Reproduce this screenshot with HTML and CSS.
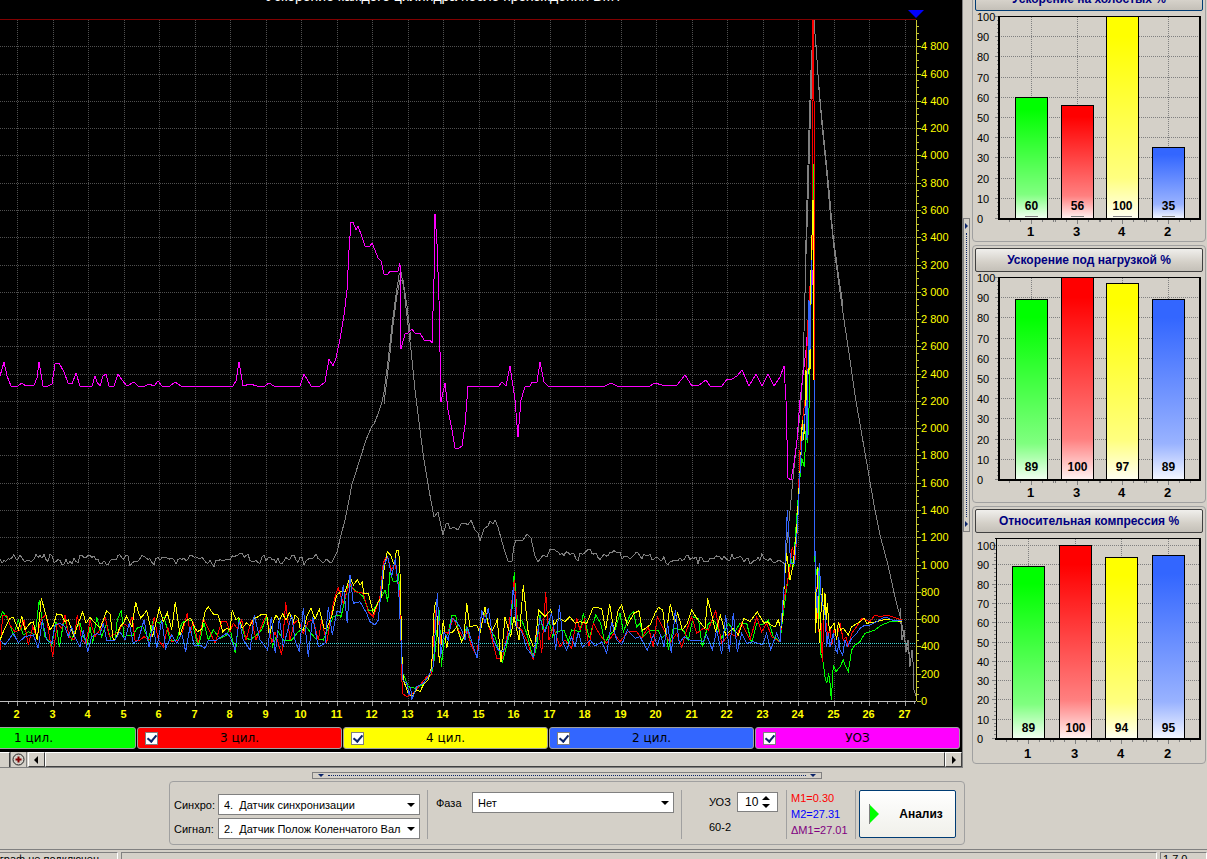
FILE: index.html
```html
<!DOCTYPE html>
<html lang="ru">
<head>
<meta charset="utf-8">
<title>Ускорение каждого цилиндра</title>
<link rel="stylesheet" href="styles.css">
</head>
<body>
<main class="workspace">
  <section class="scope">
    <svg class="scope-plot" id="scope" viewBox="0 0 962 726" role="img" aria-label="График ускорения"></svg>
    <div class="channels">
      <label class="channel green"><input type="checkbox" checked><span>1 цил.</span></label>
      <label class="channel red"><input type="checkbox" checked><span>3 цил.</span></label>
      <label class="channel yellow"><input type="checkbox" checked><span>4 цил.</span></label>
      <label class="channel blue"><input type="checkbox" checked><span>2 цил.</span></label>
      <label class="channel magenta"><input type="checkbox" checked><span>УОЗ</span></label>
    </div>
    <div class="scrollbar">
      <span class="stub"></span>
      <button class="zoom" aria-label="Увеличить"><svg width="13" height="13" viewBox="0 0 13 13"><circle cx="6.5" cy="6.5" r="5.5" fill="none" stroke="#222"/><path d="M6.5 3.5v6M3.5 6.5h6" stroke="#800000" stroke-width="2"/></svg></button>
      <button class="raised" aria-label="Влево"><svg width="5" height="8" viewBox="0 0 5 8"><path d="M4 0v8L0 4z"/></svg></button>
      <span class="thumb raised"></span>
      <button class="raised" aria-label="Вправо"><svg width="5" height="8" viewBox="0 0 5 8"><path d="M1 0v8L5 4z"/></svg></button>
    </div>
  </section>
  <div class="vsplit"><div class="vhandle"><i></i><b></b><i></i></div></div>
  <aside class="side">
    <section class="panel"><button class="caption active">Ускорение на холостых %</button><svg class="bars" viewBox="-1 0 232 230" data-values="60,56,100,35" data-left="25" data-top="6" data-bottom="208" data-centers="57,103,148,194" data-underline="1"></svg></section>
    <section class="panel"><button class="caption">Ускорение под нагрузкой %</button><svg class="bars" viewBox="-1 0 232 230" data-values="89,100,97,89" data-left="25" data-top="6" data-bottom="208" data-centers="57,103,148,194"></svg></section>
    <section class="panel"><button class="caption">Относительная компрессия %</button><svg class="bars" viewBox="-1 0 232 230" data-values="89,100,94,95" data-left="22" data-top="13" data-bottom="206" data-centers="54,101,147,194"></svg></section>
  </aside>
</main>
<footer class="dock">
  <div class="hhandle"><i></i><b></b><i></i></div>
  <form class="controls">
    <div class="sources">
      <label for="sync">Синхро:</label>
      <span class="combo"><select id="sync"><option>4.&nbsp; Датчик синхронизации</option></select></span>
      <label for="signal">Сигнал:</label>
      <span class="combo"><select id="signal"><option>2.&nbsp; Датчик Полож Коленчатого Вала</option></select></span>
    </div>
    <div class="phase">
      <label for="phase">Фаза</label>
      <span class="combo"><select id="phase"><option>Нет</option></select></span>
    </div>
    <div class="timing">
      <label for="uoz">УОЗ</label>
      <span class="spin"><input id="uoz" type="text" inputmode="numeric" value="10"><span class="spin-buttons"><button type="button" class="up" aria-label="Больше"></button><button type="button" class="down" aria-label="Меньше"></button></span></span>
      <span>60-2</span>
    </div>
    <div class="markers"><span class="m1">M1=0.30</span><span class="m2">M2=27.31</span><span class="dm">ΔM1=27.01</span></div>
    <div class="run"><button type="button" class="analyse"><svg width="10" height="20" viewBox="0 0 10 20"><path d="M0 0v20L10 10z" fill="#0f0"/><path d="M.5 0v20" stroke="#808080"/></svg><span>Анализ</span></button></div>
  </form>
</footer>
<div class="status"><span class="cell device">Осциллограф не подключен</span><span class="cell middle"></span><span class="cell version">1.7.0</span></div>
<script src="charts.js"></script>
</body>
</html>
```
FILE: styles.css
```css
* { box-sizing: border-box; }
body {
  margin: 0;
  height: 100vh;
  display: flex;
  flex-direction: column;
  overflow: hidden;
  background: #d4d0c8;
  color: #000;
  font: 11px/14px "Liberation Sans", Arial, sans-serif;
}
button, input, select { font: inherit; color: inherit; margin: 0; padding: 0; }

.workspace { display: flex; flex: none; align-items: flex-start; }
.scope { flex: 1; min-width: 0; background: #000; border-right: 1px solid #808080; overflow: hidden; }
.scope-plot { display: block; width: 100%; }
.title { font-size: 14px; fill: #fff; }
.axis-y { font-size: 11px; fill: #ff0; }
.axis-x { font-size: 11px; font-weight: bold; fill: #ff0; text-anchor: middle; }

.channels {
  display: grid;
  grid-template-columns: repeat(5, 1fr);
  column-gap: 1px;
  margin-left: -69px;
  padding: 1px 2px 3px 0;
}
.channel {
  display: flex;
  align-items: center;
  height: 22px;
  padding: 0 7px;
  border: 1px solid #a0a0a0;
  border-radius: 3px;
  font: 12px/18px "DejaVu Sans", Verdana, sans-serif;
}
.channel span { flex: 1; text-align: center; margin-right: 13px; }
.channel input {
  appearance: none;
  flex: none;
  width: 13px;
  height: 13px;
  border: 1px solid #808080;
  background: #fff;
  display: grid;
  place-items: center;
}
.channel input:checked::before {
  content: "";
  width: 4px;
  height: 7px;
  margin-bottom: 2px;
  border: solid #0a246a;
  border-width: 0 2px 2px 0;
  transform: rotate(40deg);
}
.green { background: #0f0; }
.red { background: #f00; }
.yellow { background: #ff0; }
.blue { background: #36f; }
.magenta { background: #f0f; }

.scrollbar { display: flex; height: 16px; background: #d4d0c8; border-bottom: 1px solid #808080; }
.scrollbar button, .thumb { display: grid; place-items: center; background: #d4d0c8; }
.scrollbar button { flex: none; width: 17px; }
.stub { width: 10px; border-right: 1px solid #404040; border-top: 1px solid #fff; }
.zoom { border: solid #808080; border-width: 0 1px; margin-right: 1px; }
.raised { border: 1px solid; border-color: #fff #404040 #404040 #fff; }
.thumb { flex: 1; }

.vsplit { flex: none; width: 9px; align-self: center; }
.vhandle {
  display: flex; flex-direction: column; align-items: center; justify-content: space-between;
  width: 7px; height: 314px; margin-bottom: 18px; padding: 4px 0;
  border: 1px solid #808080;
}
.vhandle i { border: 3px solid transparent; border-left: 3px solid #0a246a; border-right: 0; }
.vhandle b { flex: 1; margin: 4px 0; border-left: 1px dotted #0a246a; }

.side { flex: none; width: 235px; margin-top: -16px; padding-right: 1px; display: flex; flex-direction: column; gap: 3px; }
.panel { display: flex; flex-direction: column; border: 1px solid #a0a0a0; border-radius: 4px; padding-top: 2px; }
.caption {
  height: 24px;
  margin: 0 2px;
  border: 1px solid #404040;
  border-radius: 2px;
  background: linear-gradient(#f0efec, #d4d0c8 60%, #c4c0b8);
  color: #000080;
  font-weight: bold;
  font-size: 12px;
}
.caption.active { border-color: #003c74; }
.bars { display: block; width: 100%; }
.tick-label { font-size: 11px; }
.bar-value { font-size: 12px; font-weight: bold; text-anchor: middle; }
.bar-name { font-size: 13px; font-weight: bold; text-anchor: middle; }

.dock { flex: 1; margin-left: 169px; max-width: 796px; padding-top: 4px; }
.hhandle {
  display: flex; align-items: center; justify-content: space-between;
  width: 64%; height: 7px; margin: 0 auto 2px; padding: 0 5px;
  border: 1px solid #808080;
}
.hhandle i { border: 3px solid transparent; border-top-color: #0a246a; border-bottom: 0; }
.hhandle b { flex: 1; margin: 0 4px; border-top: 1px dotted #0a246a; }

.controls { display: flex; align-items: flex-start; height: 64px; padding: 8px 8px 0 4px; border: 1px solid #a0a0a0; border-radius: 4px; }
.controls > div { height: 49px; border-right: 1px solid #a0a0a0; }
.controls > .run { border: 0; }
.controls > .sources, .controls > .phase { flex: 1 1 253px; }
.sources { display: grid; grid-template-columns: 44px 1fr; row-gap: 3px; padding: 4px 7px 0 0; align-items: center; align-content: start; }
.combo { position: relative; display: block; height: 21px; }
.combo select {
  appearance: none;
  width: 100%;
  height: 21px;
  padding: 0 18px 0 5px;
  border: 1px solid #808080;
  border-radius: 0;
  background: #fff;
}
.combo::after {
  content: "";
  position: absolute;
  right: 5px;
  top: 9px;
  border: 4px solid transparent;
  border-top-color: #000;
  border-bottom: 0;
}
.phase { display: grid; grid-template-columns: 36px 1fr; align-items: center; align-content: start; padding: 2px 7px 0 8px; }
.timing { display: grid; grid-template-columns: 28px 41px; align-items: center; align-content: start; row-gap: 8px; padding: 2px 8px 0 27px; }
.spin { display: flex; height: 20px; background: #fff; border: 1px solid #808080; }
.spin input { width: 24px; border: 0; background: none; padding-left: 7px; font-size: 12px; }
.spin-buttons { display: flex; flex-direction: column; justify-content: center; gap: 4px; }
.spin-buttons button { width: 0; height: 4px; border: 4px solid transparent; background: none; }
.spin-buttons .up { border-bottom-color: #000; border-top: 0; }
.spin-buttons .down { border-top-color: #000; border-bottom: 0; }
.markers { display: flex; flex-direction: column; width: 69px; padding-left: 4px; line-height: 16px; }
.m1 { color: #f00; }
.m2 { color: #00f; }
.dm { color: #800080; }
.analyse {
  display: flex; align-items: center;
  width: 97px; height: 48px; margin-left: 3px; padding-left: 9px;
  border: 1px solid #003c74; border-radius: 2px;
  background: linear-gradient(#fff, #f0f0ea);
  font-size: 12px; font-weight: bold;
}
.analyse span { flex: 1; text-align: center; padding-left: 8px; }

.status { flex: none; display: flex; gap: 3px; height: 10px; padding-top: 2px; border-top: 1px solid #808080; overflow: hidden; }
.cell { height: 20px; padding: 0 2px; border: 1px solid; border-color: #808080 #fff #fff #808080; white-space: nowrap; line-height: 12px; }
.device { display: flex; justify-content: flex-end; width: 118px; padding-right: 18px; border-left: 0; }
.middle { flex: 1; }
.version { width: 47px; }
```
FILE: charts.js
```javascript
const NS = 'http://www.w3.org/2000/svg';
function add(parent, name, attrs, text) {
  const el = document.createElementNS(NS, name);
  for (const key in attrs) el.setAttribute(key, attrs[key]);
  if (text !== undefined) el.textContent = text;
  parent.appendChild(el);
  return el;
}
function line(parent, x1, y1, x2, y2, stroke, extra) {
  return add(parent, 'line', Object.assign({ x1, y1, x2, y2, stroke, 'shape-rendering': 'crispEdges' }, extra));
}

/* ---- main plot ---- */
const scope = document.getElementById('scope');
const dots = { 'stroke-dasharray': '1 1' };
const xAt = v => Math.round(17 + (v - 2) * 35.52) + 0.5;
const yAt = v => Math.round(701 - v * 0.1364) + 0.5;

for (let v = 2; v <= 27; v++) line(scope, xAt(v), 20, xAt(v), 701, '#505050', dots);
for (let v = 200; v <= 4800; v += 200) line(scope, 0, yAt(v), 916, yAt(v), '#505050', dots);
line(scope, 0, 19.5, 916, 19.5, '#800000');
line(scope, 0, 643.5, 916, 643.5, '#40e0e0', dots);

/* Trace points are stored in thirds of a pixel, relative to each section's origin. */
const ORIGINS = [[0, 540], [320, 530], [540, 560], [760, 400]];
function trace(color, sections, climb, fall) {
  const pts = [];
  const push = (x, y) => { if (!pts.length || x >= pts[pts.length - 1][0]) pts.push([x, y]); };
  sections.forEach((text, i) => {
    text.trim().split(/\s+/).forEach(p => {
      const [x, y] = p.split(',').map(Number);
      push(ORIGINS[i][0] + x / 3, ORIGINS[i][1] + y / 3);
    });
  });
  if (climb) climb.forEach(p => push(p[0], p[1]));
  if (fall) fall.trim().split(/\s+/).forEach(p => {
    const [x, y] = p.split(',').map(Number);
    push(760 + x / 3, 400 + y / 3);
  });
  polyline(pts, color);
}
function polyline(pts, color) {
  add(scope, 'polyline', {
    points: pts.map(p => p[0].toFixed(1) + ',' + p[1].toFixed(1)).join(' '),
    fill: 'none', stroke: color, 'shape-rendering': 'crispEdges'
  });
}
function parse(text) { return text.trim().split(/\s+/).map(p => p.split(',').map(Number)); }

/* engine speed */
const ripple = (a, b, base) => {
  const out = [];
  for (let x = a; x <= b; x += 2) out.push([x, base + 2.6 * Math.sin(x * 0.21 + 2 * Math.sin(x * 0.043)) + 3.4 * Math.sin(x * x * 0.37) * Math.sin(x * 0.11) + 1.8 * Math.sin(x * 0.83)]);
  return out;
};
polyline([].concat(
  ripple(0, 332, 559),
  parse('334,558 337,552 341,535 345,520 349,500 352,484 354,478 360,459 366,440 368,435 372,426 374,424 378,414 382,402 384,392 388,361 392,325 396,295 399,275 401,272 404,290 408,325 411,350 415,390 420,430 424,460 429,490 434,517 438,512 443,535 446,524 448,523 450,529 454,527 458,530 461,524 465,523 468,525 471,520 475,530 478,533 480,541 484,529 488,526 490,521 493,524 495,520 498,527 502,542 505,552 508,561 512,561 514,546 516,540 520,541 523,540 527,534 531,538 535,556 538,562 543,555 547,557 550,549 553,549 558,552'),
  ripple(560, 640, 555), ripple(642, 782, 559),
  parse('785,564 788,532 791,500 794,468 797,440 800,415 803,370 806,255 808,200 810,130 811,100 812,60 814,20 815,34 817,60 819,90 822,125 826,165 830,210 834,248 839,285 844,320 850,360 855,395 861,430 868,470 874,505 880,535 888,565 895,597 901,620 905,642 909,652 910,666 912,650 913,662 914,690 917,699')
), '#808080');
polyline(parse('805,280 807,200 809,130 811,70 813,30'), '#808080');
polyline(parse('384,404 389,362 393,325 397,295 400,280 403,280 407,306 411,340'), '#808080');
polyline(parse('816,45 818,75 821,110 825,150 829,190 833,235 838,272 843,306'), '#808080');
polyline(parse('900,608 902,640 904,630 906,652 908,640 910,667'), '#808080');

/* ignition advance */
polyline(parse('0,376 4,362 7,376 11,386 18,386 22,383 26,386 34,385 37,378 39,362 43,386 48,386 52,384 55,364 59,363 64,372 68,383 72,384 76,373 80,386 92,386 95,376 97,382 100,386 103,376 106,374 109,386 114,386 118,374 122,380 127,386 134,382 138,386 145,386 149,384 154,386 158,381 162,386 170,386 175,382 181,386 233,386 236,381 239,362 243,386 250,384 257,386 265,386 269,383 274,386 300,386 304,374 311,386 320,386 325,382 329,359 333,366 336,358 340,339 344,315 347,290 349,250 351,222 353,222 356,230 358,226 362,237 365,246 370,246 372,243 375,250 378,258 381,261 384,274 388,274 390,271 398,271 400,263 401,349 405,334 408,333 412,329 415,333 420,333 424,340 430,340 432,343 434,280 435,214 437,244 439,300 441,402 445,383 448,410 452,430 455,448 459,448 462,446 465,425 468,386 499,386 502,382 506,386 510,366 515,400 518,437 521,400 525,387 530,386 532,382 537,382 540,362 544,382 548,386 605,386 611,383 617,386 650,386 655,383 662,385 677,385 681,380 685,375 692,386 699,385 706,380 710,386 722,386 727,379 732,379 737,376 742,370 749,386 756,374 762,386 768,374 774,386 780,377 784,366 786,400 788,478 791,480 794,463 797,440 800,400 803,375 806,350 808,325 811,300 813,270'), '#f0f');

trace('#0f0', [
  '0,235 8,215 25,240 40,285 55,240 70,285 85,275 105,285 118,180 125,230 135,290 155,315 168,245 178,322 193,235 203,270 215,300 230,260 240,250 250,290 262,310 270,260 278,310 290,232 305,290 320,250 332,300 345,300 352,240 364,210 372,290 385,285 400,285 410,265 428,258 445,300 460,240 480,250 492,230 510,300 530,300 545,250 560,240 575,240 595,322 612,248 625,300 640,270 660,295 680,285 690,265 706,340 717,235 735,290 750,300 770,285 785,270 800,230 818,318 835,275 850,300 875,300 895,275 920,262 945,295 970,300 985,265 1000,230 1020,225',
  '62,265 85,165 105,180 130,200 145,240 160,240 180,210 195,180 203,215 210,125 220,155 230,155 236,130 240,220 247,430 255,445 265,470 285,475 305,465 325,440 335,430 343,390 352,290 358,240 364,410 372,330 385,310 395,255 407,255 415,300 425,335 440,290 455,350 470,380 480,300 495,250 510,300 525,320 547,400 560,345 572,300 583,125 592,270 605,270 620,310 640,385 650,350',
  '0,165 10,215 28,185 38,230 50,215 72,210 85,245 95,210 120,215 130,160 148,235 167,165 182,190 195,250 208,225 225,210 240,160 250,215 270,165 280,155 290,200 300,190 310,230 330,210 355,210 365,235 380,220 385,270 400,205 430,210 445,240 460,170 475,175 487,262 505,190 525,185 545,235 565,190 585,215 600,190 620,190 635,250 650,190 665,195 685,180 700,230 720,245',
  '60,725 70,640 85,530 92,475 100,500 113,310 125,175 133,200 140,50 143,130 148,0'
], [[810, 300], [812, 240], [814, 164], [814, 560]],
  '164,480 170,520 177,505 182,760 190,790 195,830 200,850 206,820 210,850 214,900 220,795 228,815 240,800 250,780 257,800 265,815 275,750 285,735 300,725 315,700 330,695 345,690 365,675 390,665 425,665');

trace('#f00', [
  '0,330 8,225 20,225 30,255 45,275 60,270 72,240 85,315 98,260 110,290 125,235 138,225 158,350 172,250 185,265 195,225 207,290 222,300 232,225 245,300 258,310 270,240 285,290 300,270 315,230 328,290 340,285 355,275 370,250 385,260 397,230 405,300 420,300 432,290 450,300 463,230 475,300 490,320 503,260 515,305 535,300 548,275 562,220 570,280 580,245 595,310 610,235 625,265 645,310 665,245 680,245 690,275 700,250 712,265 725,240 738,300 755,240 768,300 790,245 800,225 815,310 825,275 845,345 857,187 870,300 882,250 895,240 910,280 925,245 940,240 955,300 965,240 980,310 1000,190 1015,140',
  '55,175 70,220 88,160 105,185 130,190 145,245 160,260 180,200 190,100 200,75 215,120 225,100 235,160 240,210 247,490 260,500 280,490 300,465 320,440 333,435 345,270 352,200 364,370 372,305 385,310 400,265 415,300 428,320 440,300 455,350 470,380 480,290 497,250 510,300 530,385 547,385 565,300 575,220 583,150 592,290 605,300 620,330 640,390 655,290',
  '5,280 17,97 27,240 40,200 60,260 75,240 95,265 110,175 120,210 133,180 147,258 160,190 180,225 200,250 222,220 240,245 265,215 290,215 305,235 325,200 340,260 352,170 372,210 390,250 410,220 425,262 440,210 455,170 470,220 490,205 505,210 527,152 545,250 570,220 590,230 605,190 630,240 650,170 665,215 680,190 695,230 718,245',
  '60,720 72,600 85,530 90,500 97,440 105,480 112,390 120,150 125,80 135,0'
], [[808, 320], [811, 270], [812, 250], [812, 100], [813, 20], [813, 100], [814, 101], [814, 380]]);

trace('#f00', ['', '', '', '165,450 168,560 175,670 179,720 182,640 187,785 193,620 200,690 205,710 210,680 215,735 222,690 230,715 240,670 250,720 258,710 265,740 275,700 290,680 305,655 330,665 345,645 360,650 380,645 425,660'].slice(3).concat().length ? [] : [], null,
  '165,450 168,560 175,670 179,720 182,640 187,785 193,620 200,690 205,710 210,680 215,735 222,690 230,715 240,670 250,720 258,710 265,740 275,700 290,680 305,655 330,665 345,645 360,650 380,645 425,660');

trace('#ff0', [
  '0,300 10,275 30,235 40,232 55,270 65,228 75,270 90,250 100,245 112,300 124,175 135,215 150,270 160,255 170,222 185,225 195,245 205,240 212,262 222,290 235,250 248,215 258,250 270,232 285,250 300,265 308,245 320,212 330,222 340,300 348,295 360,260 370,250 380,228 396,262 407,185 415,215 422,235 440,212 458,290 478,205 490,245 502,218 515,270 526,185 540,285 552,250 562,240 572,235 582,258 592,275 605,268 615,215 625,200 640,222 655,225 668,275 680,265 690,270 697,210 708,240 716,232 726,265 740,248 750,258 762,235 775,230 785,222 800,222 808,285 820,245 828,225 838,240 848,222 858,240 868,218 880,245 885,225 895,235 900,265 910,270 922,225 933,205 945,238 958,208 972,265 980,265 995,228 1010,165 1018,160',
  '60,185 75,185 90,140 100,165 112,150 120,165 128,155 130,190 145,190 160,250 175,215 183,205 192,120 202,65 212,75 220,100 225,100 229,60 236,62 240,130 246,380 250,450 265,490 275,500 290,480 300,485 310,465 325,450 335,410 343,230 349,215 358,400 370,270 380,355 388,310 400,305 410,290 425,335 432,320 440,220 450,290 470,285 480,310 495,232 505,285 515,305 532,270 543,395 555,262 572,320 582,260 597,330 610,165 625,310 640,350 645,345 656,240',
  '0,155 15,170 32,150 42,195 55,175 75,185 90,170 105,190 120,185 140,190 160,142 185,145 197,210 209,132 222,215 235,150 245,135 262,195 282,160 297,152 307,212 330,195 345,160 355,142 368,150 378,225 391,132 404,190 413,158 427,210 442,190 455,150 470,175 495,205 503,115 527,215 541,165 557,225 580,205 595,225 612,175 630,185 652,155 672,190 682,185 692,195 705,200 715,180 722,205',
  '65,680 75,520 80,460 90,540 100,490 110,390 115,300 122,180 127,60 131,120 137,0'
], [[806, 370], [807, 420], [809, 330], [810, 370], [811, 270], [813, 200], [814, 380]]);
trace('#ff0', [], null,
  '165,470 167,700 173,500 178,730 187,565 191,660 195,580 198,660 202,610 208,690 222,670 230,720 235,665 242,690 250,685 265,705 275,680 300,665 312,655 320,670 350,665 380,657 425,665');

trace('#36f', [
  '0,300 15,315 40,280 55,308 75,290 100,285 115,325 127,240 140,300 155,310 165,255 180,250 195,260 205,290 215,260 225,290 240,320 250,270 263,335 275,290 290,280 300,285 310,250 320,300 345,300 360,275 375,300 388,250 400,310 415,300 432,240 447,320 460,255 470,325 485,240 497,325 515,285 530,310 545,280 557,335 570,260 582,315 600,315 615,325 625,300 650,300 680,280 690,290 705,330 718,240 730,300 750,330 763,225 780,300 803,330 814,230 826,340 838,235 850,320 875,225 885,300 898,335 910,205 925,350 938,230 955,320 975,310 985,200 997,285 1010,215 1018,215',
  '60,250 70,165 82,280 90,135 100,220 120,215 140,250 150,275 165,285 175,270 190,110 203,80 215,140 226,85 236,180 243,330 248,450 260,460 268,495 272,470 275,510 290,470 310,460 325,440 340,410 352,190 362,380 372,305 385,330 395,265 410,275 425,300 435,330 442,290 460,350 472,385 485,240 495,280 505,235 520,330 535,360 550,365 570,300 580,170 590,290 605,305 620,355 640,380 655,300',
  '0,175 15,215 35,160 47,270 58,135 70,250 80,270 95,230 105,260 115,215 127,262 150,240 165,258 185,245 200,280 215,185 230,240 245,255 262,210 285,235 300,230 322,270 340,225 352,255 362,225 372,260 383,190 394,280 406,150 418,250 432,230 450,240 475,240 490,245 500,225 517,270 530,210 545,282 557,165 568,275 580,160 592,275 605,220 620,250 640,245 668,255 680,220 692,268 710,220 720,245',
  '60,720 72,560 82,330 92,490 103,490 112,390 120,220 125,130 130,90 140,0'
], [[807, 440], [809, 300], [810, 350], [812, 260]]);
line(scope, 814.5, 380, 814.5, 556, '#36f');
trace('#36f', [], null,
  '165,450 167,560 172,640 178,490 184,600 190,620 196,650 200,740 205,700 210,740 220,700 227,750 233,760 236,710 240,750 248,765 255,720 262,740 275,715 290,700 300,685 315,675 330,675 350,665 365,655 380,652 400,662 425,662');

/* axes */
line(scope, 0, 701.5, 916, 701.5, '#c0c0c0');
for (let i = -1; i <= 101; i++) {
  const x = Math.round(17 + i * 8.88) + 0.5;
  if (x < 916) line(scope, x, 702, x, i % 4 === 0 ? 706 : 704, '#a0a0a0');
}
line(scope, 916.5, 20, 916.5, 701, '#c8c832');
for (let v = 0; v < 5000; v += 50) line(scope, 917, yAt(v), v % 200 ? 919 : 921, yAt(v), '#c8c832');
for (let v = 0; v <= 4800; v += 200) {
  const label = v >= 1000 ? Math.floor(v / 1000) + ' ' + String(v % 1000).padStart(3, '0') : v;
  add(scope, 'text', { x: 921, y: yAt(v) + 3.5, class: 'axis-y' }, label);
}
for (let v = 2; v <= 27; v++) add(scope, 'text', { x: xAt(v) - 1, y: 718, class: 'axis-x' }, v);
add(scope, 'path', { d: 'M908 10h16l-8 8z', fill: '#00f' });
add(scope, 'text', { x: 266, y: 1, class: 'title' }, 'Ускорение каждого цилиндра после прохождения ВМТ');

/* ---- bar charts ---- */
const FILLS = ['#00ff00', '#ff0000', '#ffff00', '#3366ff'];
const NAMES = ['1', '3', '4', '2'];
document.querySelectorAll('.bars').forEach((svg, chart) => {
  const d = svg.dataset;
  const left = +d.left, top = +d.top, bottom = +d.bottom;
  const values = d.values.split(',').map(Number);
  const centers = d.centers.split(',').map(Number);
  const y = v => Math.round(bottom - (bottom - top) * v / 100) - 0.5;
  const defs = add(svg, 'defs', {});
  const dotted = { 'stroke-dasharray': '1 1' };
  for (let v = 0; v <= 100; v += 10) {
    if (v) line(svg, left, y(v), 226, y(v), '#808080', dotted);
    line(svg, left - 4, y(v), left, y(v), '#808080');
    if (v < 100) for (let s = 2; s < 10; s += 2) line(svg, left - 2, y(v + s), left, y(v + s), '#808080');
    add(svg, 'text', { x: 3, y: y(v) + 4.5, class: 'tick-label' }, v);
  }
  centers.forEach(c => {
    line(svg, c + 0.5, 6, c + 0.5, bottom, '#808080', dotted);
    for (let s = -2; s <= 2; s++) line(svg, c + s * 11 + 0.5, bottom, c + s * 11 + 0.5, bottom + (s ? 3 : 5), '#808080');
  });
  line(svg, left - 1, 5.5, 227, 5.5, '#000');
  values.forEach((v, i) => {
    const id = 'fill' + chart + i;
    const g = add(defs, 'linearGradient', { id, x1: 0, y1: 0, x2: 0, y2: 1 });
    add(g, 'stop', { offset: '0', 'stop-color': FILLS[i] });
    add(g, 'stop', { offset: '0.1', 'stop-color': FILLS[i] });
    add(g, 'stop', { offset: '0.8', 'stop-color': FILLS[i], 'stop-opacity': '0.5' });
    add(g, 'stop', { offset: '1', 'stop-color': FILLS[i], 'stop-opacity': '0.05' });
    const box = { x: centers[i] - 15.5, y: y(v), width: 32, height: bottom - y(v) - 0.5, 'shape-rendering': 'crispEdges' };
    add(svg, 'rect', Object.assign({ fill: '#fff' }, box));
    add(svg, 'rect', Object.assign({ fill: `url(#${id})`, stroke: '#000' }, box));
    add(svg, 'text', { x: centers[i] + 0.5, y: 199, class: 'bar-value' }, v);
    if (d.underline) line(svg, centers[i] - (v > 99 ? 9 : 6), 205.5, centers[i] + (v > 99 ? 10 : 7), 205.5, '#808080');
    add(svg, 'text', { x: centers[i] - 0.5, y: 225, class: 'bar-name' }, NAMES[i]);
  });
  line(svg, left, 5, left, bottom + 1, '#000', { 'stroke-width': left > 22 ? 2 : 1 });
  line(svg, 226, 5, 226, bottom + 1, '#000', { 'stroke-width': 2 });
  line(svg, left - 1, bottom, 227, bottom, '#000', { 'stroke-width': 2 });
});
```
